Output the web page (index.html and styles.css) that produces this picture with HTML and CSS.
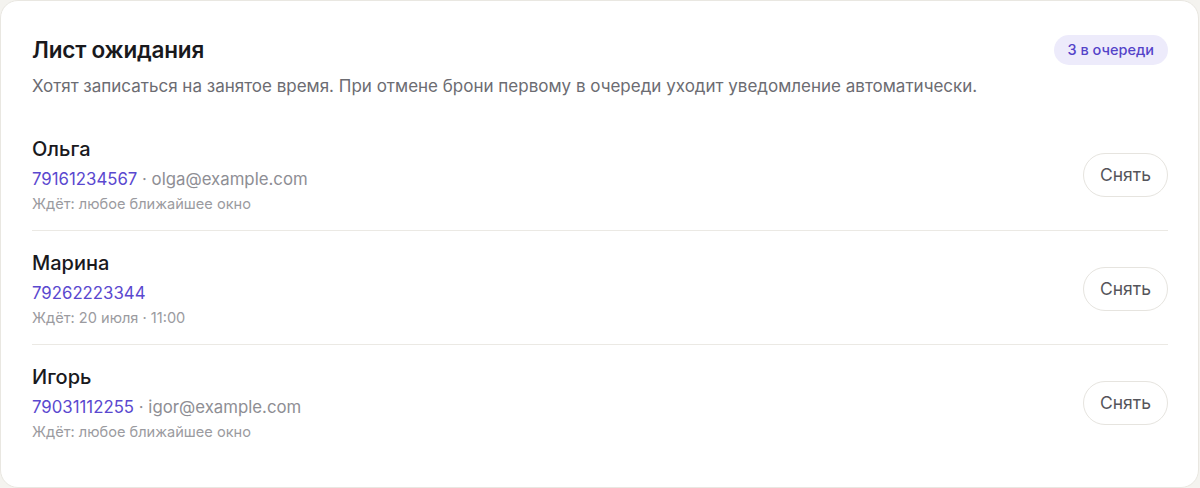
FILE: index.html
```html
<!DOCTYPE html>
<html lang="ru">
<head>
    <meta charset="utf-8">
    <title>Лист ожидания</title>
    <link rel="stylesheet" href="styles.css">
</head>
<body>
    <div class="card">
        <div class="card-head">
            <div class="head-text">
                <h2>Лист ожидания</h2>
                <p class="subtitle">Хотят записаться на занятое время. При отмене брони первому в очереди уходит уведомление автоматически.</p>
            </div>
            <span class="badge">3 в очереди</span>
        </div>

        <div class="waitlist">
            <div class="entry">
                <div class="entry-info">
                    <div class="entry-name">Ольга</div>
                    <div class="entry-contact"><a href="#" class="phone">79161234567</a> · olga@example.com</div>
                    <div class="entry-wait">Ждёт: любое ближайшее окно</div>
                </div>
                <button class="remove-btn">Снять</button>
            </div>
            <div class="entry">
                <div class="entry-info">
                    <div class="entry-name">Марина</div>
                    <div class="entry-contact"><a href="#" class="phone">79262223344</a></div>
                    <div class="entry-wait">Ждёт: 20 июля · 11:00</div>
                </div>
                <button class="remove-btn">Снять</button>
            </div>
            <div class="entry">
                <div class="entry-info">
                    <div class="entry-name">Игорь</div>
                    <div class="entry-contact"><a href="#" class="phone">79031112255</a> · igor@example.com</div>
                    <div class="entry-wait">Ждёт: любое ближайшее окно</div>
                </div>
                <button class="remove-btn">Снять</button>
            </div>
        </div>
    </div>
</body>
</html>
```

FILE: styles.css
```css
* {
    box-sizing: border-box;
}

body {
    margin: 0;
    background-color: #f4f3ef;
    font-family: Inter, "Noto Sans", sans-serif;
    color: #19191d;
}

.card {
    height: 488px;
    width: 1199px;
    padding: 34px 30px 28px 31px;
    background-color: #ffffff;
    border: 1px solid #e9e7e1;
    border-radius: 18px;
}

.card-head {
    display: flex;
    justify-content: space-between;
    align-items: flex-start;
    margin-bottom: 19px;
}

.card-head h2 {
    margin: 0;
    font-size: 22.5px;
    line-height: 30px;
    font-weight: 600;
    letter-spacing: -0.2px;
}

.subtitle {
    margin: 9px 0 0 0;
    font-size: 17px;
    line-height: 24px;
    color: #6c6c72;
}

.badge {
    padding: 0 14px;
    height: 30px;
    line-height: 30px;
    border-radius: 15px;
    background-color: #edebfb;
    color: #5443c9;
    font-size: 14.5px;
    font-weight: 500;
}

.entry {
    display: flex;
    justify-content: space-between;
    align-items: center;
    padding: 18px 0 16px 0;
    border-top: 1px solid #ebe9e4;
}

.entry:first-child {
    border-top: none;
}

.entry-name {
    font-size: 20px;
    line-height: 28px;
    font-weight: 500;
}

.entry-contact {
    margin-top: 4px;
    font-size: 16.8px;
    line-height: 24px;
    color: #8e8e94;
}

.entry-contact .phone {
    color: #5a48cf;
    text-decoration: none;
}

.entry-wait {
    margin-top: 3px;
    font-size: 14.6px;
    line-height: 20px;
    color: #9b9ba0;
}

.remove-btn {
    height: 44px;
    padding: 0 16px;
    background-color: #ffffff;
    border: 1px solid #e6e4df;
    border-radius: 22px;
    font-family: Inter, "Noto Sans", sans-serif;
    font-size: 17.5px;
    color: #55555b;
    cursor: pointer;
}
```
